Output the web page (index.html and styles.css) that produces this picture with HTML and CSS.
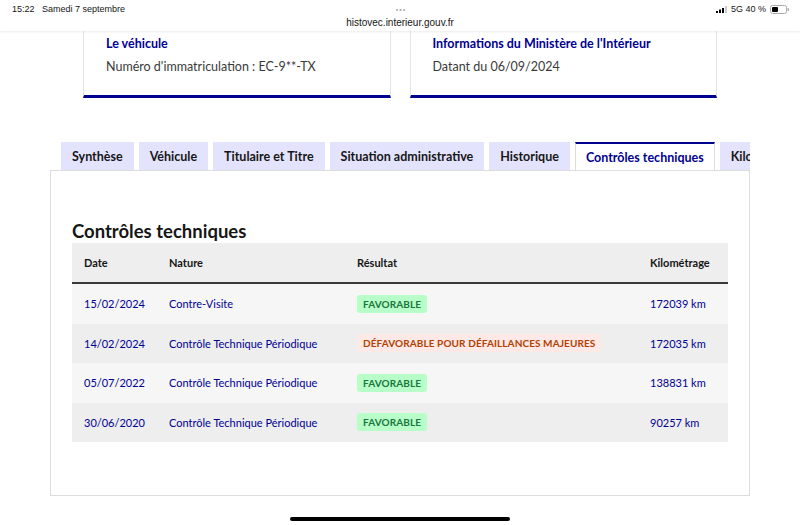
FILE: index.html
```html
<!DOCTYPE html>
<html lang="fr">
<head>
    <meta charset="UTF-8">
    <meta name="viewport" content="width=device-width, initial-scale=1.0">
    <title>HistoVec - Contrôles techniques</title>
    <link rel="stylesheet" href="styles.css">
</head>
<body>

    <!-- Barre d'état et adresse -->
    <div class="status-bar">
        <div class="status-row">
            <span class="status-left">15:22&nbsp;&nbsp; Samedi 7 septembre</span>
            <span class="status-dots">&bull;&bull;&bull;</span>
            <span class="status-right">
                <svg class="signal" width="11" height="7" viewBox="0 0 11 7">
                    <rect x="0" y="5" width="2" height="2" fill="#000"/>
                    <rect x="3" y="3.5" width="2" height="3.5" fill="#000"/>
                    <rect x="6" y="2" width="2" height="5" fill="#000"/>
                    <rect x="9" y="0" width="2" height="7" fill="#ccc"/>
                </svg>
                5G 40 %
                <svg class="battery" width="20" height="9" viewBox="0 0 20 9">
                    <rect x="0.5" y="0.5" width="16" height="8" rx="2" fill="none" stroke="#aaa"/>
                    <rect x="2" y="2" width="6" height="5" rx="1" fill="#000"/>
                    <rect x="17.5" y="3" width="1.5" height="3" rx="0.7" fill="#aaa"/>
                </svg>
            </span>
        </div>
        <div class="url">histovec.interieur.gouv.fr</div>
    </div>

    <div class="cards">
        <div class="card">
            <h3 class="card-title">Le véhicule</h3>
            <p class="card-text">Numéro d'immatriculation : EC-9**-TX</p>
        </div>
        <div class="card">
            <h3 class="card-title">Informations du Ministère de l'Intérieur</h3>
            <p class="card-text">Datant du 06/09/2024</p>
        </div>
    </div>

    <div class="tabs">
        <ul class="tab-list">
            <li class="tab">Synthèse</li>
            <li class="tab">Véhicule</li>
            <li class="tab">Titulaire et Titre</li>
            <li class="tab">Situation administrative</li>
            <li class="tab">Historique</li>
            <li class="tab active">Contrôles techniques</li>
            <li class="tab">Kilométrage</li>
        </ul>

        <div class="tab-panel">
            <h2>Contrôles techniques</h2>
            <table>
                <thead>
                    <tr>
                        <th class="col-date">Date</th>
                        <th class="col-nature">Nature</th>
                        <th class="col-result">Résultat</th>
                        <th class="col-km">Kilométrage</th>
                    </tr>
                </thead>
                <tbody>
                    <tr>
                        <td>15/02/2024</td>
                        <td>Contre-Visite</td>
                        <td><span class="badge success">Favorable</span></td>
                        <td>172039 km</td>
                    </tr>
                    <tr>
                        <td>14/02/2024</td>
                        <td>Contrôle Technique Périodique</td>
                        <td><span class="badge error">Défavorable pour défaillances majeures</span></td>
                        <td>172035 km</td>
                    </tr>
                    <tr>
                        <td>05/07/2022</td>
                        <td>Contrôle Technique Périodique</td>
                        <td><span class="badge success">Favorable</span></td>
                        <td>138831 km</td>
                    </tr>
                    <tr>
                        <td>30/06/2020</td>
                        <td>Contrôle Technique Périodique</td>
                        <td><span class="badge success">Favorable</span></td>
                        <td>90257 km</td>
                    </tr>
                </tbody>
            </table>
        </div>
    </div>

    <div class="home-indicator"></div>

</body>
</html>
```

FILE: styles.css
```css
body {
    margin: 0;
    font-family: Lato, "Noto Sans", sans-serif;
    color: #161616;
    background: #fff;
    width: 800px;
    height: 525px;
    overflow: hidden;
}

/* status bar + url */
.status-bar {
    height: 31px;
    background: #fff;
    box-shadow: 0 1px 2px rgba(0, 0, 0, 0.08);
    position: relative;
    z-index: 1;
    font-family: "Liberation Sans", Arial, sans-serif;
}
.status-row {
    display: grid;
    grid-template-columns: 1fr auto 1fr;
    align-items: center;
    padding: 3px 10px 0 12px;
    height: 12px;
    font-size: 9px;
}
.status-dots {
    color: #aaa;
    font-size: 7px;
    letter-spacing: 1px;
}
.status-right {
    display: flex;
    justify-content: flex-end;
    align-items: center;
    gap: 4px;
}
.url {
    text-align: center;
    font-size: 10px;
    margin-top: 2px;
}

/* cards */
.cards {
    display: flex;
    gap: 19px;
    width: 634px;
    margin: 0 auto;
}
.card {
    flex: 1;
    border: 1px solid #e5e5e5;
    border-top: none;
    border-bottom: 3px solid #000091;
    padding: 5px 22px 0;
    height: 59px;
}
.card-title {
    margin: 0;
    font-size: 12.5px;
    font-weight: 700;
    color: #000091;
    line-height: 16px;
}
.card-text {
    margin: 7px 0 0;
    font-size: 12.5px;
    color: #3a3a3a;
    line-height: 16px;
}

/* tabs */
.tabs {
    width: 700px;
    margin: 44px auto 0;
}
.tab-list {
    display: flex;
    gap: 5px;
    list-style: none;
    margin: 0;
    padding: 0 0 0 11px;
    overflow: hidden;
    white-space: nowrap;
    height: 28px;
}
.tab {
    background: #e3e3fd;
    padding: 1px 11px 0;
    font-size: 12.5px;
    font-weight: 700;
    line-height: 27px;
    flex-shrink: 0;
}
.tab.active {
    background: #fff;
    color: #000091;
    border-top: 2px solid #000091;
    border-left: 1px solid #ddd;
    border-right: 1px solid #ddd;
    line-height: 25px;
    padding: 1px 10px 0;
}
.tab-panel {
    border: 1px solid #ddd;
    border-top: none;
    box-shadow: inset 0 1px 0 #ddd;
    height: 325px;
    padding: 0 21px;
}
.tab-panel h2 {
    margin: 0;
    padding-top: 50px;
    font-size: 18.5px;
    line-height: 23px;
}

/* table */
table {
    width: 100%;
    border-collapse: collapse;
    font-size: 11px;
}
th {
    background: #eee;
    text-align: left;
    font-weight: 700;
    height: 39px;
    padding: 0 12px;
    border-bottom: 2px solid #3a3a3a;
}
td {
    color: #000091;
    height: 39.5px;
    padding: 0 12px;
}
tbody tr:nth-child(odd) {
    background: #f6f6f6;
}
tbody tr:nth-child(even) {
    background: #eee;
}
.col-date {
    width: 60px;
}
.col-nature {
    width: 164px;
}
.col-km {
    width: 66px;
}
.badge {
    display: inline-block;
    font-size: 10px;
    font-weight: 700;
    text-transform: uppercase;
    letter-spacing: 0.1px;
    padding: 0 6px;
    line-height: 18px;
    border-radius: 3px;
}
.badge.success {
    background: #b8fec9;
    color: #18753c;
}
.badge.error {
    background: #ffe9e6;
    color: #b34000;
}

.home-indicator {
    width: 220px;
    height: 4px;
    border-radius: 2px;
    background: #000;
    margin: 21px auto 0;
}
```
